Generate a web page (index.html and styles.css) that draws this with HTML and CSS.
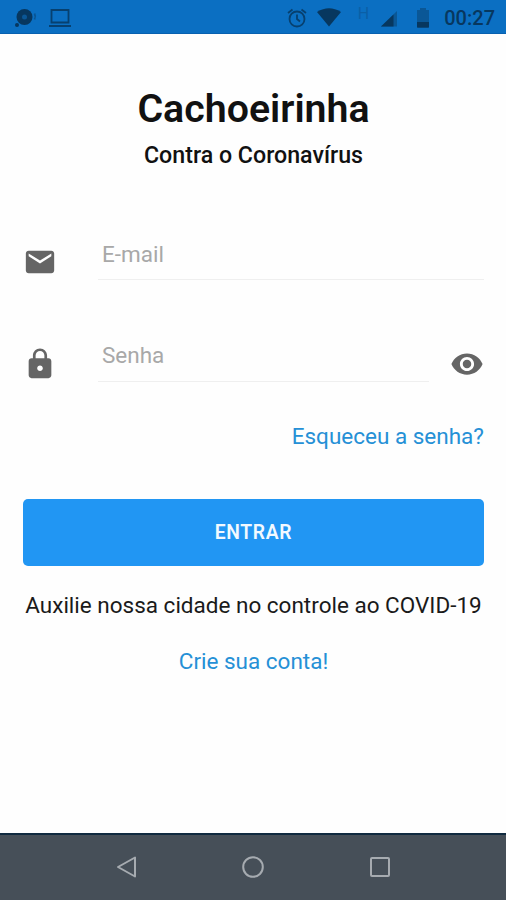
FILE: index.html
```html
<!DOCTYPE html>
<html lang="pt-BR">
<head>
  <meta charset="UTF-8">
  <title>Cachoeirinha Contra o Coronavírus</title>
  <link rel="stylesheet" href="styles.css">
</head>
<body>
  <!-- Status bar -->
  <header class="status-bar">
    <div class="status-left">
      <svg width="24" height="20" viewBox="0 0 24 20">
        <circle cx="10.5" cy="9" r="8"/>
        <circle class="hole" cx="10.5" cy="9" r="2.5"/>
        <circle cx="3" cy="17" r="2"/>
        <path class="line dim" d="M20.5 5.5q1.600 3 0 6"/>
      </svg>
      <svg width="24" height="20" viewBox="0 0 24 20">
        <path class="line" d="M3.500 2h17v12.500h-17zM1 18h22"/>
      </svg>
    </div>
    <div class="status-right">
      <svg class="alarm" width="20" height="20" viewBox="0 0 20 20">
        <circle class="line" cx="10" cy="11" r="7.500"/>
        <path class="line" d="M10 6.500V11l3 2.500M1 5l4.500-3.500M19 5l-4.500-3.500"/>
      </svg>
      <svg class="wifi" width="24" height="19" viewBox="0 0 24 19">
        <path d="M12 18.500L0 4Q12-3.500 24 4z"/>
      </svg>
      <span class="network">H</span>
      <svg class="signal" width="18" height="18" viewBox="0 0 18 18">
        <path class="faint" d="M0 17.500L16 2v15.500z"/>
        <path d="M0 17.500L12.500 5.500v12z"/>
      </svg>
      <svg class="battery" width="12" height="20" viewBox="0 0 12 20">
        <path class="faint" d="M3 0h6v2h3v18H0V2h3z"/>
        <path d="M0 14h12v4.500q0 1-1 1H1q-1 0-1-1z"/>
      </svg>
      <span class="clock">00:27</span>
    </div>
  </header>

  <!-- Login -->
  <main class="login">
    <h1>Cachoeirinha</h1>
    <h2>Contra o Coronavírus</h2>

    <form onsubmit="event.preventDefault()">
      <div class="field">
        <svg class="icon" viewBox="0 0 24 24">
          <path d="M20 4H4c-1.100 0-1.990.9-1.990 2L2 18c0 1.100.9 2 2 2h16c1.100 0 2-.9 2-2V6c0-1.100-.9-2-2-2zm0 4l-8 5-8-5V6l8 5 8-5v2z"/>
        </svg>
        <input type="email" placeholder="E-mail" aria-label="E-mail">
      </div>

      <div class="field password">
        <svg class="icon" viewBox="0 0 24 24">
          <path d="M18 8h-1V6c0-2.760-2.240-5-5-5S7 3.240 7 6v2H6c-1.100 0-2 .9-2 2v10c0 1.100.9 2 2 2h12c1.100 0 2-.9 2-2V10c0-1.100-.9-2-2-2zm-6 9c-1.100 0-2-.9-2-2s.9-2 2-2 2 .9 2 2-.9 2-2 2zm3.100-9H8.900V6c0-1.710 1.390-3.100 3.100-3.100s3.100 1.390 3.100 3.100v2z"/>
        </svg>
        <input type="password" placeholder="Senha" aria-label="Senha">
        <svg class="icon eye" viewBox="0 0 24 24">
          <path d="M12 4.500C7 4.500 2.730 7.610 1 12c1.730 4.390 6 7.500 11 7.500s9.270-3.110 11-7.500c-1.730-4.390-6-7.500-11-7.500zM12 17c-2.760 0-5-2.240-5-5s2.240-5 5-5 5 2.240 5 5-2.240 5-5 5zm0-8c-1.660 0-3 1.340-3 3s1.340 3 3 3 3-1.340 3-3-1.340-3-3-3z"/>
        </svg>
      </div>

      <a class="forgot" href="#">Esqueceu a senha?</a>
      <button type="submit">ENTRAR</button>
    </form>

    <p>Auxilie nossa cidade no controle ao COVID-19</p>
    <a class="signup" href="#">Crie sua conta!</a>
  </main>

  <!-- Navigation bar -->
  <nav class="nav-bar">
    <svg width="24" height="24" viewBox="0 0 24 24"><path d="M20 2.500v19L3 12z"/></svg>
    <svg width="24" height="24" viewBox="0 0 24 24"><circle cx="12" cy="12" r="9.800"/></svg>
    <svg width="24" height="24" viewBox="0 0 24 24"><rect x="3" y="3" width="18" height="18" rx="1"/></svg>
  </nav>
</body>
</html>
```
FILE: styles.css
```css
* {
  box-sizing: border-box;
}

body {
  display: flex;
  flex-direction: column;
  height: 900px;
  margin: 0;
  font-family: Roboto, sans-serif;
  font-size: 22.5px;
  color: #1a1a1a;
  background-color: #fefefe;
}

svg {
  display: block;
  flex: none;
}

a {
  color: #2590d6;
  text-decoration: none;
}

.status-bar {
  display: flex;
  justify-content: space-between;
  height: 34px;
  padding: 2px 11px 0 14px;
  background-color: #0b6fc2;
  border-bottom: 1px solid #0861b0;
  color: #07375f;
}

.status-left,
.status-right {
  display: flex;
  align-items: center;
}

.status-left {
  gap: 10px;
}

.status-bar svg {
  fill: #07375f;
}

.status-bar .line {
  fill: none;
  stroke: #07406f;
  stroke-width: 1.8;
}

.status-bar .dim {
  stroke: #095594;
}

.status-bar .hole {
  fill: #0b5695;
}

.status-bar .faint {
  fill: #0a5796;
}

.wifi {
  margin-left: 10px;
}

.network {
  margin: 0 12px 8px 17px;
  font-size: 16px;
  line-height: 16px;
  color: #0b5fa6;
}

.battery {
  margin-left: 18px;
}

.clock {
  margin-left: 15px;
  font-size: 20px;
  font-weight: 500;
}

.login {
  flex: 1;
  padding: 51px 22px 0 23px;
  text-align: center;
}

h1 {
  margin: 0;
  font-size: 39.3px;
  font-weight: 600;
  line-height: 48px;
  color: #111;
}

h2 {
  margin: 7px 0 0;
  font-size: 23.2px;
  font-weight: 500;
  line-height: 30px;
  color: #111;
}

form {
  margin-top: 60px;
}

.field {
  display: flex;
  align-items: center;
  height: 50px;
}

.icon {
  width: 34px;
  height: 34px;
  margin-top: 14px;
  fill: #656565;
}

.field input {
  flex: 1;
  min-width: 0;
  height: 50px;
  margin-left: 41px;
  padding: 0 4px 2px;
  border: none;
  border-bottom: 1px solid #efefef;
  outline: none;
  font: inherit;
  background: none;
}

.field input::placeholder {
  color: #a8a8a8;
}

.password {
  margin-top: 52px;
}

.password input {
  padding-bottom: 4px;
}

.eye {
  margin-left: 21px;
}

.forgot {
  display: block;
  margin-top: 41px;
  line-height: 26px;
  text-align: right;
}

button {
  display: block;
  width: 100%;
  height: 67px;
  margin-top: 50px;
  padding-bottom: 2px;
  border: none;
  border-radius: 5px;
  font-family: inherit;
  font-size: 19.3px;
  font-weight: 600;
  letter-spacing: 0.7px;
  color: #f2f9ff;
  background-color: #2196f3;
}

p {
  margin: 26px 0 0;
  line-height: 26px;
  white-space: nowrap;
}

.signup {
  display: block;
  margin-top: 30px;
  line-height: 26px;
}

.nav-bar {
  display: flex;
  justify-content: center;
  align-items: center;
  gap: 102.5px;
  height: 67px;
  padding-bottom: 2px;
  border-top: 2px solid #102a40;
  background-color: #464f58;
}

.nav-bar svg {
  fill: none;
  stroke: #a6abb0;
  stroke-width: 2;
  stroke-linejoin: round;
}
```
